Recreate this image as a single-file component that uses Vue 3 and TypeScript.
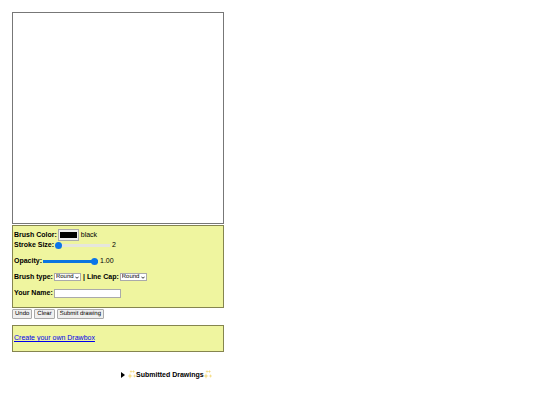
<script setup lang="ts">
import { ref, computed, onMounted } from 'vue'

type Point = { x: number; y: number }
type Stroke = { color: string; size: number; opacity: number; cap: CanvasLineCap; join: CanvasLineJoin; points: Point[] }

const board = ref<HTMLCanvasElement | null>(null)
const color = ref('#000000')
const size = ref(2)
const opacity = ref(1)
const brush = ref<CanvasLineJoin>('round')
const cap = ref<CanvasLineCap>('round')
const author = ref('')
const strokes = ref<Stroke[]>([])
let active: Stroke | null = null

const sparkles =
  'M2 3l.7 2.300L4.500 6l-1.800.7L2 9l-.7-2.300L-.5 6l1.800-.7zM6.500 4l.5 1.500L8.500 6l-1.500.5-.5 1.500-.5-1.500L4.500 6l1.500-.5zM3 0l.5 1 1 .5-1 .5-.5 1-.5-1-1-.5 1-.5zM5.500 0l.5 1 1 .5-1 .5-.5 1-.5-1-1-.5 1-.5z'

const colorName = computed(() => (color.value === '#000000' ? 'black' : color.value))

function redraw() {
  const el = board.value
  const ctx = el?.getContext('2d')
  if (!el || !ctx) return
  ctx.clearRect(0, 0, el.width, el.height)
  for (const s of strokes.value) {
    ctx.strokeStyle = s.color
    ctx.lineWidth = s.size
    ctx.globalAlpha = s.opacity
    ctx.lineCap = s.cap
    ctx.lineJoin = s.join
    ctx.beginPath()
    s.points.forEach((p) => ctx.lineTo(p.x, p.y))
    ctx.stroke()
  }
}

function start(e: PointerEvent) {
  strokes.value.push({
    color: color.value,
    size: Number(size.value),
    opacity: Number(opacity.value),
    cap: cap.value,
    join: brush.value,
    points: [{ x: e.offsetX, y: e.offsetY }],
  })
  active = strokes.value[strokes.value.length - 1]
}

function move(e: PointerEvent) {
  if (!active) return
  active.points.push({ x: e.offsetX, y: e.offsetY })
  redraw()
}

function stop() {
  active = null
}

function undo() {
  strokes.value.pop()
  redraw()
}

function clear() {
  strokes.value = []
  redraw()
}

onMounted(redraw)
</script>

<template>
  <main class="page">
    <form class="drawbox" @submit.prevent>
      <canvas ref="board" class="board" width="210" height="210" @pointerdown="start" @pointermove="move" @pointerup="stop" @pointerleave="stop"></canvas>
      <div class="panel tools">
        <div class="row">
          <label for="color">Brush Color:</label>
          <input id="color" v-model="color" class="swatch" type="color" />
          <span class="value">{{ colorName }}</span>
        </div>
        <div class="row">
          <label for="size">Stroke Size:</label>
          <input id="size" v-model="size" class="slider" type="range" min="2" max="50" />
          <output for="size" class="value">{{ size }}</output>
        </div>
        <div class="row spaced">
          <label for="opacity">Opacity:</label>
          <input id="opacity" v-model="opacity" class="slider full" type="range" min="0" max="1" step="0.01" />
          <output for="opacity" class="value">{{ Number(opacity).toFixed(2) }}</output>
        </div>
        <div class="row spaced">
          <label for="brush">Brush type:</label>
          <span class="select">
            <select id="brush" v-model="brush">
              <option value="round">Round</option>
              <option value="bevel">Bevel</option>
              <option value="miter">Miter</option>
            </select>
            <svg class="chevron" viewBox="0 0 10 6"><path d="M1 1l4 4 4-4" /></svg>
          </span>
          <b>|</b>
          <label for="cap">Line Cap:</label>
          <span class="select">
            <select id="cap" v-model="cap">
              <option value="round">Round</option>
              <option value="butt">Butt</option>
              <option value="square">Square</option>
            </select>
            <svg class="chevron" viewBox="0 0 10 6"><path d="M1 1l4 4 4-4" /></svg>
          </span>
        </div>
        <div class="row spaced">
          <label for="author">Your Name:</label>
          <input id="author" v-model="author" class="name" type="text" />
        </div>
      </div>
      <div class="actions">
        <button type="button" @click="undo">Undo</button>
        <button type="button" @click="clear">Clear</button>
        <button type="submit">Submit drawing</button>
      </div>
      <div class="panel promo">
        <a href="#create">Create your own Drawbox</a>
      </div>
    </form>
    <details class="gallery">
      <summary>
        <svg class="marker" viewBox="0 0 4 6"><path d="M0 0l4 3-4 3z" /></svg>
        <svg class="sparkles" viewBox="0 0 8 10"><path :d="sparkles" /></svg>
        <span>Submitted Drawings</span>
        <svg class="sparkles" viewBox="0 0 8 10"><path :d="sparkles" /></svg>
      </summary>
    </details>
  </main>
</template>

<style>
body {
  background: #fff;
}
</style>

<style scoped>
.page {
  padding: 12px;
  font: 7px/10px "Liberation Sans", Arial, sans-serif;
  color: #000;
}

.drawbox {
  display: flex;
  flex-direction: column;
  width: fit-content;
}

.board {
  display: block;
  border: 1px solid #777;
  touch-action: none;
}

.panel {
  border: 1px solid #85854f;
  background: #eff59f;
}

.tools {
  margin-top: 1px;
  padding: 4px 1px 9px;
}

.row {
  display: flex;
  align-items: center;
  gap: 1px;
  height: 10px;
}

.spaced {
  margin-top: 6px;
}

label {
  font-weight: bold;
}

input,
select,
button {
  box-sizing: border-box;
  margin: 0;
  font: 6px/8px "Liberation Sans", Arial, sans-serif;
  text-rendering: geometricPrecision;
  color: #000;
}

.swatch {
  width: 21px;
  height: 12px;
  padding: 2px 1px;
  border: 1px solid #aaa;
  background: #efefef;
}

.swatch::-webkit-color-swatch-wrapper {
  padding: 0;
}

.swatch::-webkit-color-swatch {
  border: 0;
}

.slider {
  appearance: none;
  width: 55px;
  height: 7px;
  background: linear-gradient(#e6e6dc, #e6e6dc) center / 100% 3px no-repeat;
}

.full {
  background-image: linear-gradient(#0b75e0, #0b75e0);
}

.slider::-webkit-slider-thumb {
  appearance: none;
  width: 7px;
  height: 7px;
  border-radius: 50%;
  background: #0b75e8;
}

.value {
  margin-left: 1px;
}

.select {
  display: grid;
  align-items: center;
}

.select > * {
  grid-area: 1 / 1;
}

select {
  appearance: none;
  width: 27px;
  height: 8px;
  padding: 0 1px;
  border: 1px solid #aaa;
  border-radius: 0;
  background: #fff;
  line-height: 6px;
}

.chevron {
  justify-self: end;
  width: 4px;
  height: 3px;
  margin-right: 2px;
  fill: none;
  stroke: #000;
  stroke-width: 2;
  pointer-events: none;
}

b {
  margin: 0 1px;
}

.name {
  width: 67px;
  height: 9px;
  padding: 0 2px;
  border: 1px solid #aaa;
}

.actions {
  display: flex;
  gap: 2px;
  margin-top: 1px;
}

button {
  height: 10px;
  padding: 0 2px;
  border: 1px solid #aaa;
  border-radius: 1px;
  background: #efefef;
  line-height: 8px;
}

.promo {
  margin-top: 6px;
  padding: 7px 1px 8px;
}

a {
  color: #0000ee;
}

.gallery {
  width: fit-content;
  margin: 18px 0 0 109px;
}

summary {
  display: flex;
  align-items: center;
  font-weight: bold;
  cursor: pointer;
}

.marker {
  width: 4px;
  height: 6px;
  margin-right: 3px;
}

.sparkles {
  width: 8px;
  height: 10px;
  fill: #f5dc83;
}
</style>
